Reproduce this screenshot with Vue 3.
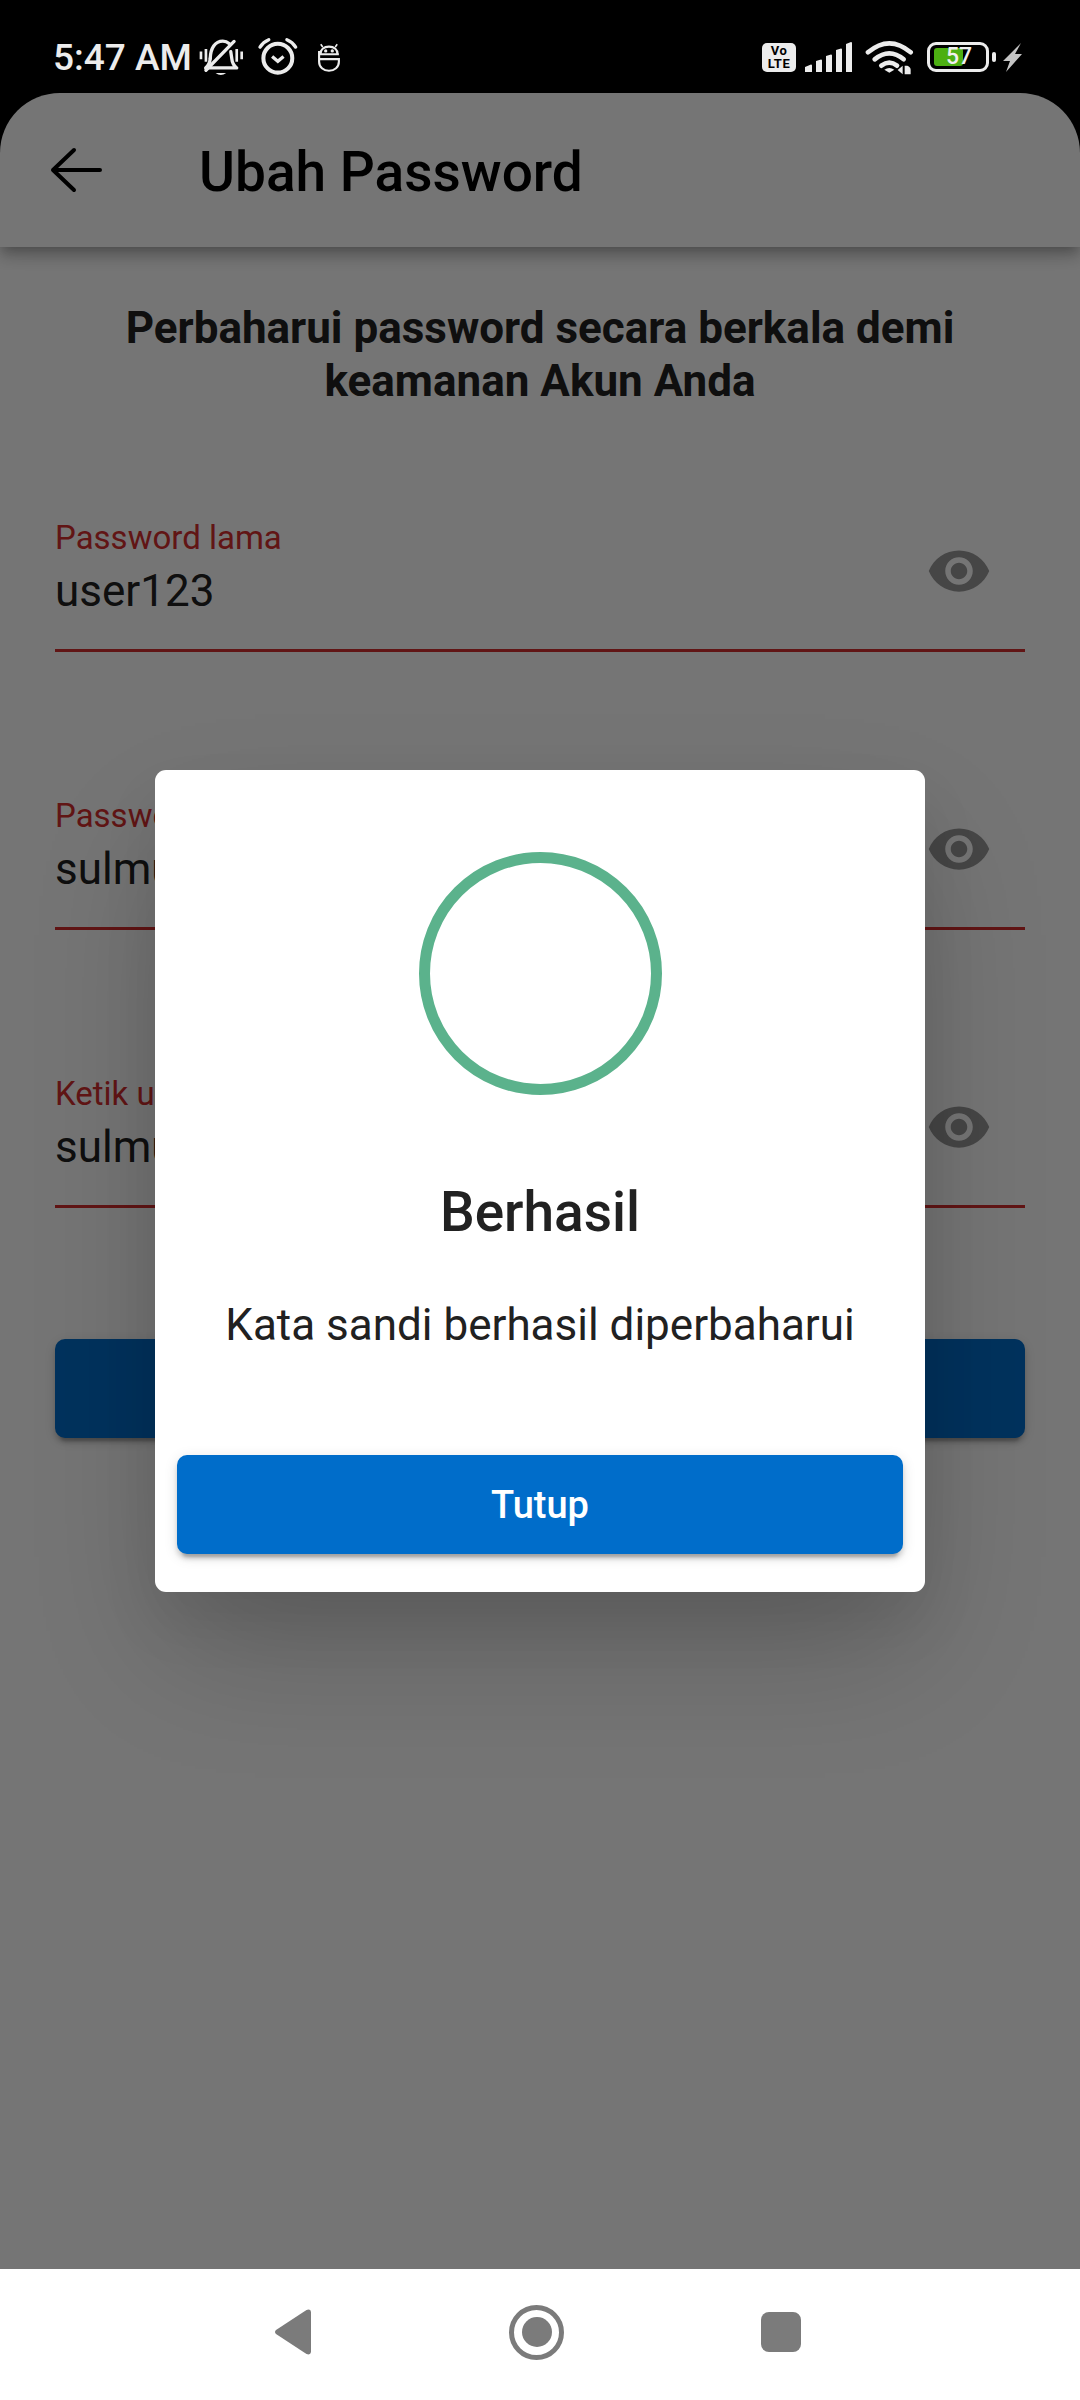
<script setup>
const fields = [
  { label: 'Password lama', value: 'user123' },
  { label: 'Password baru', value: 'sulmuna123' },
  { label: 'Ketik ulang password baru', value: 'sulmuna123' }
]
</script>

<template>
  <div class="screen">
    <header class="status">
      <div class="status-left">
        <span class="clock">5:47 AM</span>
        <svg class="ic-bell" viewBox="20 20 145 126" width="48" height="42" fill="none" stroke="#ececec" stroke-width="10" stroke-linecap="round" stroke-linejoin="round">
          <path d="M32 63v24M47 56v38M140 56v38M155 63v24" stroke-linecap="butt" stroke-width="8"/>
          <path d="M60 84c1-30 14-52 38-52 8 0 14 3 20 8"/>
          <path d="M60 84c-1 14-6 22-14 29h94c-10-8-14-17-15-29l-3-20"/>
          <path d="M47 120 132 33"/>
          <path d="M76 128h32q-16 13-32 0z" fill="#ececec" stroke="none"/>
        </svg>
        <svg class="ic-alarm" viewBox="200 22 128 113" width="43" height="38" fill="none" stroke="#ececec" stroke-width="12">
          <circle cx="262" cy="85" r="43"/>
          <path d="M245 80l17 14 17-14" stroke-width="10"/>
          <path d="M209 52c6-10 14-17 26-22M315 52c-6-10-14-17-26-22" stroke-width="10" stroke-linecap="round"/>
        </svg>
        <svg class="ic-robot" viewBox="380 36 75 94" width="25" height="31" fill="none" stroke="#ececec" stroke-width="6.500">
          <path d="M389 70h60M393 70c0-15 11-23 26-23s26 8 26 23"/>
          <path d="M389 60v25h60v8c0 16-13 27-30 27s-30-11-30-27v-8"/>
          <circle cx="409" cy="60" r="5" fill="#ececec" stroke="none"/>
          <circle cx="429" cy="60" r="5" fill="#ececec" stroke="none"/>
          <path d="M394 40l6 8M444 40l-6 8" stroke-width="5"/>
        </svg>
      </div>
      <div class="status-right">
        <div class="volte"><span>Vo</span><span>LTE</span></div>
        <svg class="signal" viewBox="0 0 48 30" width="48" height="30" fill="#ececec">
          <path d="M0 30v-5l6-2.500q1 0 1 1V30zM11 30V19l5-1.500q1 0 1 1V30zM21 30V14l5-1.500q1 0 1 1V30zM31 30V8l5-1.500q1 0 1 1V30zM41 30V2l5-2q1 0 1 1v29z"/>
        </svg>
        <svg class="ic-wifi" viewBox="15 15 150 117" width="50" height="39" fill="none" stroke="#ececec" stroke-width="14" stroke-linecap="round">
          <path d="M24 52Q88-2 152 52"/>
          <path d="M44 73Q88 37 131 73"/>
          <path d="M64 92Q88 74 111 92"/>
          <path d="M73 104Q88 94 103 104L88 113z" fill="#ececec" stroke="none"/>
          <path d="M128 92v26L113 105zM134 92h8q10 4 10 12v14h-18z" fill="#ececec" stroke="none"/>
        </svg>
        <div class="battery">
          <div class="cell"><div class="level"></div><span class="pct">57</span></div>
          <div class="nub"></div>
        </div>
        <svg class="ic-bolt" viewBox="0 0 19 29" width="19" height="29"><path d="M18 0 0 18h7L3 29 19 11h-7z" fill="#c4c4c4"/></svg>
      </div>
    </header>

    <main class="main">
      <div class="appbar">
        <svg class="back" viewBox="0 0 52 46" width="52" height="46" fill="none" stroke="#000" stroke-width="4" stroke-linecap="round" stroke-linejoin="round">
          <path d="M50 23H3M24 3 3 23l21 20"/>
        </svg>
        <h1 class="title">Ubah Password</h1>
      </div>
      <div class="content">
        <p class="intro">Perbaharui password secara berkala demi keamanan Akun Anda</p>
        <div v-for="f in fields" :key="f.label" class="field">
          <div class="field-text">
            <span class="label">{{ f.label }}</span>
            <span class="value">{{ f.value }}</span>
          </div>
          <svg class="eye" viewBox="0 0 24 24" width="66" height="66"><path fill="#9a9a9a" d="M12 4.500C7 4.500 2.730 7.610 1 12c1.730 4.390 6 7.500 11 7.500s9.270-3.110 11-7.500c-1.730-4.390-6-7.500-11-7.500zM12 17c-2.760 0-5-2.240-5-5s2.240-5 5-5 5 2.240 5 5-2.240 5-5 5zm0-8c-1.660 0-3 1.340-3 3s1.340 3 3 3 3-1.340 3-3-1.340-3-3-3z"/></svg>
        </div>
        <div class="submit"></div>
      </div>

      <div class="overlay">
        <div class="dialog">
          <div class="ring"></div>
          <h2 class="d-title">Berhasil</h2>
          <p class="d-text">Kata sandi berhasil diperbaharui</p>
          <button class="d-btn">Tutup</button>
        </div>
      </div>
    </main>

    <nav class="nav">
      <svg class="tri" viewBox="0 0 37 46" width="37" height="46"><path d="M32.500 1 2 21q-2 2 0 4l30.500 20q4 1.500 4.500-2V3q-.5-3.500-4.500-2z" fill="#7b7b7b"/></svg>
      <div class="home"><div class="dot"></div></div>
      <div class="square"></div>
    </nav>
  </div>
</template>

<style>
html, body { margin: 0; background: #000; }
</style>

<style scoped>
.screen {
  width: 1080px;
  height: 2400px;
  display: flex;
  flex-direction: column;
  font-family: Roboto, "Liberation Sans", sans-serif;
  overflow: hidden;
  background: #000;
}
.status {
  height: 93px;
  flex: none;
  display: flex;
  justify-content: space-between;
  align-items: flex-start;
  padding: 39px 58px 0 53px;
  box-sizing: border-box;
  background: #000;
}
.status-left { display: flex; align-items: center; height: 38px; }
.clock { color: #ececec; font-size: 37px; font-weight: 500; line-height: 38px; }
.ic-bell { margin-left: 5px; flex: none; }
.ic-alarm { margin-left: 12px; margin-top: -4px; flex: none; }
.ic-robot { margin-left: 16px; flex: none; }
.status-right { display: flex; align-items: center; height: 30px; margin-top: 3px; }
.volte {
  width: 34px; height: 29px; background: #ececec; border-radius: 5px;
  display: flex; flex-direction: column; align-items: center; justify-content: center;
  color: #000; font-size: 13px; font-weight: 700; line-height: 13px; letter-spacing: .5px;
  flex: none;
}
.signal { margin-left: 9px; flex: none; }
.ic-wifi { margin-left: 12px; margin-top: 5px; flex: none; }
.battery { display: flex; align-items: center; margin-left: 12px; flex: none; }
.cell {
  width: 62px; height: 30px; border: 3px solid #ececec; border-radius: 9px; box-sizing: border-box;
  position: relative;
}
.level { position: absolute; left: 4px; top: 3px; bottom: 3px; width: 29px; background: #4caf12; border-radius: 3px; }
.pct { position: absolute; left: 16px; top: -2px; color: #f0f0f0; font-size: 23px; line-height: 28px; font-weight: 500; }
.nub { width: 4px; height: 10px; margin-left: 3px; background: #ececec; border-radius: 2px; }
.ic-bolt { margin-left: 7px; flex: none; }

.main { flex: 1; position: relative; display: flex; flex-direction: column; min-height: 0; background: #000; }
.appbar {
  height: 154px; flex: none; background: #fff;
  border-radius: 60px 60px 0 0;
  display: flex; align-items: center;
  box-shadow: 0 5px 11px -3px rgba(0,0,0,.2), 0 11px 14px 0 rgba(0,0,0,.14), 0 3px 28px 0 rgba(0,0,0,.12);
  position: relative; z-index: 1;
  padding-left: 50px;
  box-sizing: border-box;
}
.back { flex: none; }
.title { margin: 3px 0 0 97px; font-size: 55px; font-weight: 500; color: #000; }
.content { flex: 1; background: #fff; padding: 55px 55px 0; display: flex; flex-direction: column; }
.intro { margin: 0 60px; text-align: center; font-size: 44px; line-height: 53px; font-weight: 700; color: #212121; }
.field {
  height: 130px; border-bottom: 3px solid #d32f2f;
  display: flex; justify-content: space-between; align-items: flex-start;
  margin-top: 126px;
  padding-top: 19px;
  box-sizing: content-box;
}
.intro + .field { margin-top: 92px; }
.field-text { display: flex; flex-direction: column; gap: 8px; }
.label { font-size: 33px; color: #d32f2f; line-height: 38px; }
.value { font-size: 44px; color: #212121; line-height: 52px; }
.eye { margin-top: 19px; margin-right: 33px; flex: none; }
.submit {
  margin-top: 131px; height: 99px; border-radius: 10px; background: #006dca;
  box-shadow: 0 8px 3px -5px rgba(0,0,0,.2), 0 5px 5px 0 rgba(0,0,0,.14), 0 3px 14px 0 rgba(0,0,0,.12);
}
.overlay {
  position: absolute; inset: 0; z-index: 2;
  background: rgba(0,0,0,.54);
  display: flex; align-items: center; justify-content: center;
}
.dialog {
  width: 770px; height: 822px; box-sizing: border-box;
  background: #fff; border-radius: 11px;
  display: flex; flex-direction: column; align-items: center;
  padding: 82px 22px 0;
  box-shadow: 0 65px 130px -15px rgba(0,0,0,.2), 0 30px 60px 0 rgba(0,0,0,.07);
}
.ring { width: 243px; height: 243px; box-sizing: border-box; border: 11px solid #5bb28c; border-radius: 50%; flex: none; }
.d-title { margin: 85px 0 0; font-size: 55px; line-height: 64px; font-weight: 500; color: #212121; }
.d-text { margin: 55px 0 0; font-size: 44px; line-height: 52px; color: #212121; }
.d-btn {
  margin-top: 104px; width: 726px; height: 99px; flex: none; border: 0; border-radius: 10px; background: #006dca; color: #fff;
  font: 500 38px Roboto, sans-serif;
  box-shadow: 0 8px 3px -5px rgba(0,0,0,.2), 0 5px 5px 0 rgba(0,0,0,.14), 0 3px 14px 0 rgba(0,0,0,.12);
}
.nav {
  height: 131px; flex: none; background: #fff; position: relative; z-index: 3;
  box-sizing: border-box;
  display: flex; align-items: center;
  padding: 0 0 5px 274px;
}
.tri { flex: none; }
.home {
  width: 55px; height: 55px; box-sizing: border-box; border: 5px solid #7b7b7b; border-radius: 50%;
  display: flex; align-items: center; justify-content: center;
  margin-left: 198px; flex: none;
}
.dot { width: 30px; height: 30px; border-radius: 50%; background: #7b7b7b; }
.square { margin-left: 197px; width: 40px; height: 40px; border-radius: 8px; background: #7b7b7b; flex: none; }
</style>
